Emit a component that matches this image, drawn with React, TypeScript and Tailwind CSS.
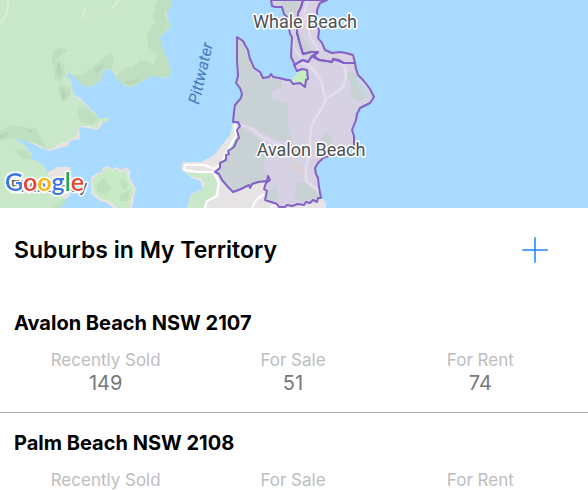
import { Plus } from 'lucide-react'

interface Stat {
  label: string
  value?: number
}

interface Suburb {
  name: string
  stats: Stat[]
}

const suburbs: Suburb[] = [
  {
    name: 'Avalon Beach NSW 2107',
    stats: [
      { label: 'Recently Sold', value: 149 },
      { label: 'For Sale', value: 51 },
      { label: 'For Rent', value: 74 },
    ],
  },
  {
    name: 'Palm Beach NSW 2108',
    stats: [{ label: 'Recently Sold' }, { label: 'For Sale' }, { label: 'For Rent' }],
  },
]

const AVALON =
  'M237 37 L243 41 L245 45 L248 50 L249 55 L250 59 L252 63 L254 68 L260 72 L263 78 L269 77 L271 74 L273 77 L279 78 L287 80 L290 80 L293 84 L300 83 L305 87 L306 80 L308 79 L307 70 L302 69 L297 71 L294 65 L299 62 L303 60 L308 62 L312 56 L315 56 L318 60 L327 61 L332 62 L333 59 L339 60 L344 63 L355 63 L356 69 L358 75 L363 80 L367 85 L370 89 L374 97 L370 103 L360 108 L357 114 L356 120 L352 130 L354 136 L354 147 L323 158 L318 163 L315 168 L316 174 L318 178 L319 187 L321 198 L318 198 L317 202 L313 200 L310 203 L306 202 L304 205 L298 204 L292 206 L287 205 L285 207 L279 207 L277 204 L265 200 L267 191 L264 189 L266 183 L270 180 L268 176 L267 181 L258 182 L252 184 L250 188 L249 185 L241 189 L233 192 L228 187 L222 180 L219 174 L215 172 L220 168 L220 163 L226 160 L226 155 L229 154 L228 151 L234 147 L237 140 L239 138 L237 130 L240 126 L238 122 L233 122 L234 112 L235 105 L241 98 L242 94 L240 88 L236 83 L238 76 L237 60 Z'

const WHALE_WEST =
  'M271 0 L272 6 L275 7 L282 7 L284 14 L287 17 L286 22 L289 27 L290 34 L292 37 L291 57 L295 65 L299 62 L303 60 L308 62 L312 56 L318 52 L311 52 L303 54 L300 44 L297 33 L298 13 L301 7 L303 0 Z'

const WHALE_EAST =
  'M303 0 L301 7 L298 13 L297 33 L300 44 L303 54 L311 52 L318 52 L313 57 L320 60 L332 62 L333 59 L344 63 L355 63 L353 55 L346 53 L340 52 L332 53 L325 50 L322 43 L318 38 L319 31 L317 23 L317 10 L320 3 L327 0 Z'

function TerritoryMap() {
  return (
    <svg
      viewBox="0 0 588 208"
      preserveAspectRatio="xMidYMid slice"
      className="block h-52 w-full bg-[#a9daff]"
      role="img"
      aria-label="Map"
    >
      {/* western shore */}
      <path
        fill="#e6e3e1"
        d="M96 114 L99 119 L104 121 L98 130 L88 128 L79 127 L80 139 L70 141 L68 146 L60 148 L50 151 L41 148 L28 142 L30 140 L78 110 L73 94 L80 98 Z M46 173 L58 167 L70 167 L72 178 L70 196 L60 203 L52 208 L30 208 Z"
      />
      <path
        fill="#c8e8c9"
        d="M0 0 H172 L171 6 L166 13 L167 19 L172 24 L168 30 L160 37 L160 43 L164 53 L168 61 L171 72 L167 79 L160 77 L152 74 L142 82 L135 86 L128 87 L120 83 L115 76 L112 70 L105 69 L101 79 L95 85 L87 87 L80 83 L72 75 L69 72 L66 77 L71 79 L73 92 L76 97 L86 105 L94 113 L98 118 L110 118 L108 122 L99 122 L97 128 L88 126 L78 126 L77 135 L68 141 L60 143 L53 148 L47 150 L41 146 L34 143 L28 142 L20 139 L12 138 L24 144 L32 154 L30 159 L38 161 L44 166 L48 175 L56 181 L64 200 L52 208 H0 Z"
      />
      <g fill="#bfdfc1">
        <path d="M158 0 H172 L170 7 L165 14 L167 21 L172 24 L160 36 L161 45 L168 61 L171 72 L166 78 L149 75 L157 55 L148 47 L147 34 L152 26 L156 22 L152 16 Z" />
        <path d="M110 53 L114 58 L112 69 L105 69 L101 79 L94 85 L87 87 L79 82 L73 75 L84 74 Z" />
        <path d="M140 60 L149 62 L157 71 L151 76 L140 83 L130 87 L120 83 L116 76 L126 67 L132 68 Z" />
        <path d="M54 61 L64 64 L65 76 L60 81 L54 78 L55 68 L52 63 L53 50 L60 48 L68 50 Z" />
        <path d="M60 84 L70 88 L70 97 L63 102 L58 91 Z" />
        <path d="M0 131 L12 125 L36 129 L41 138 L47 149 L34 143 L12 138 L0 141 Z" />
        <path d="M14 149 L29 151 L31 159 L22 159 Z" />
        <path d="M77 110 L86 106 L98 118 L93 125 L80 122 Z" />
        <path d="M52 208 L64 198 L66 202 L60 208 Z" />
      </g>
      <g fill="#b7d5b9">
        <path d="M58 58 L62 71 L60 78 L56 73 Z" />
        <path d="M62 88 L67 95 L64 101 L61 97 Z" />
        <path d="M94 70 L105 62 L101 70 L96 74 Z" />
        <path d="M125 82 L140 78 L137 82 L128 85 Z" />
        <path d="M0 135 L10 131 L7 136 L0 139 Z" />
        <path d="M27 130 L33 129 L31 133 Z" />
      </g>
      <path d="M8 0 C8 8 7 14 5 18 L0 23 M85 9 L82 18 M119 0 L111 9" fill="none" stroke="#d8eed9" strokeWidth="2" />
      <path d="M166 12 L167 18 M111 69 L115 74" stroke="#eee2c9" strokeWidth="1" />

      {/* island */}
      <path
        fill="#e6e3e1"
        d="M102 168 L107 166 L112 169 L117 167 L121 170 L127 167 L130 171 L130 178 L133 183 L136 189 L134 197 L132 208 H113 L107 203 L100 201 L91 194 L91 177 L97 173 L102 172 Z"
      />
      <path
        fill="#c8ebc5"
        d="M103 170 L108 168 L113 171 L117 169 L121 173 L126 170 L128 178 L131 185 L134 190 L131 199 L130 208 H119 L110 201 L101 199 L93 192 L93 179 L98 174 L103 174 Z"
      />
      <path fill="#c0dfbf" d="M97 184 L104 178 L112 188 L105 195 L97 192 Z M121 178 L128 183 L126 190 L120 185 Z M121 194 L130 190 L128 201 L119 201 Z" />

      {/* land south of the headland */}
      <path
        fill="#e6e4e4"
        d="M233 123 L240 125 L275 150 L300 175 L321 198 L326 202 L326 208 H187 L191 194 L203 189 L200 181 L192 178 L181 169 L182 162 L201 162 L214 155 L222 145 L230 135 Z"
      />
      <path fill="#c9e8ca" d="M185 173 L196 173 L212 174 L217 182 L215 195 L206 201 L203 208 H187 L192 194 L202 190 L206 184 L201 178 L192 177 Z M226 150 L234 137 L237 130 L235 143 L229 153 Z" />
      <path
        fill="none"
        stroke="#ffffff"
        strokeWidth="2"
        strokeLinejoin="round"
        d="M235 124 L236 135 L228 150 L221 164 L214 169 L205 165 L185 165 L184 170 L198 172 L214 172 L219 183 L217 196 L207 201 L205 208 M252 208 L256 200 L264 194 M270 207 L277 204"
      />

      {/* territory boundaries */}
      <path d={AVALON} fill="#d6d1e3" />
      <path d={WHALE_WEST} fill="#d1d2de" />
      <path d={WHALE_EAST} fill="#d8d1e2" />
      <g fill="#c8d2d5">
        <path d="M238 38 L243 43 L249 60 L253 70 L262 78 L281 80 L282 87 L271 92 L272 99 L288 104 L288 125 L292 140 L278 141 L262 132 L247 125 L238 122 L234 121 L236 104 L242 95 L237 83 Z" />
        <path d="M240 126 L256 136 L268 148 L263 166 L268 176 L267 181 L250 186 L233 192 L220 177 L215 172 L227 155 L238 141 Z" />
        <path d="M298 181 L309 182 L315 190 L319 197 L308 202 L294 199 Z M268 190 L276 187 L279 195 L275 202 L266 199 Z" />
        <path d="M347 74 L356 72 L360 88 L368 97 L359 102 L349 96 L352 90 Z M321 139 L327 132 L333 139 L331 146 L319 146 Z" />
        <path d="M298 32 L304 39 L313 51 L303 53 Z M284 0 H299 L297 12 L288 18 L282 6 Z" />
      </g>
      <path fill="#c2d9e5" d="M354 74 L359 81 L370 94 L367 97 L359 87 Z" />
      <path fill="#dccfd3" d="M292 162 L304 166 L302 175 L292 169 Z M315 158 L323 156 L316 166 Z M312 8 L318 4 L315 17 Z" />
      <path
        fill="none"
        stroke="#e2ddec"
        strokeWidth="3"
        strokeLinejoin="round"
        d="M300 62 C309 64 319 72 323 88 L325 100 C324 110 312 119 311 129 L309 152 L306 169 L306 181 L319 191 M325 100 L341 89 Q348 80 345 67 L338 61"
      />
      <path
        fill="none"
        stroke="#e2ddec"
        strokeWidth="2"
        d="M240 125 L251 128 L263 138 L275 143 L287 147 L293 158 M308 0 L304 13 L307 27 L311 38 L318 50 M291 35 L294 48 L303 60"
      />
      <path fill="#c5edbd" d="M291 81 L297 73 L302 70 L306 71 L307 79 L304 85 L297 83 Z" />
      <g fill="none" stroke="#8460c8" strokeWidth="2" strokeLinejoin="round" strokeLinecap="round">
        <path d={AVALON} />
        <path d={WHALE_WEST} />
        <path d={WHALE_EAST} />
      </g>

      {/* place labels */}
      <g
        className="font-[Roboto,sans-serif]"
        fontSize="18"
        fill="#4a4f55"
        stroke="#ffffff"
        strokeWidth="3"
        strokeLinejoin="round"
        paintOrder="stroke"
        textAnchor="middle"
      >
        <text x="305" y="28">Whale Beach</text>
        <text x="311" y="156">Avalon Beach</text>
        <text x="49" y="192" fontSize="17">Elvina Bay</text>
      </g>
      <text
        className="font-[Roboto,sans-serif]"
        transform="translate(199 105) rotate(-77)"
        fontSize="16"
        fontStyle="italic"
        fill="#4878bd"
      >
        Pittwater
      </text>

      <text
        x="5"
        y="191"
        className="font-[Lato,sans-serif] font-semibold [filter:drop-shadow(1px_0_0_white)_drop-shadow(-1px_0_0_white)_drop-shadow(0_1px_0_white)_drop-shadow(0_-1px_0_white)_drop-shadow(0_0_1px_white)]"
        fontSize="25"
      >
        <tspan fill="#3b78e7">G</tspan>
        <tspan fill="#ea4335">o</tspan>
        <tspan fill="#fbb40a">o</tspan>
        <tspan fill="#3b78e7">g</tspan>
        <tspan fill="#2ba24c">l</tspan>
        <tspan fill="#ea4335">e</tspan>
      </text>
    </svg>
  )
}

function SuburbRow({ suburb }: { suburb: Suburb }) {
  return (
    <li className="border-b border-[#a8a8a8] pt-4 pb-[18px] last:border-b-0 last:pb-0">
      <h2 className="px-3.5 text-xl leading-7 font-bold">{suburb.name}</h2>
      <dl className="mt-[11px] grid grid-cols-3 pr-3.5 pl-3 text-center">
        {suburb.stats.map(({ label, value }) => (
          <div key={label}>
            <dt className="text-[17px] leading-6 text-[#bdbdbd]">{label}</dt>
            {value !== undefined && <dd className="text-xl leading-[22px] text-[#777777]">{value}</dd>}
          </div>
        ))}
      </dl>
    </li>
  )
}

export default function App() {
  return (
    <main className="bg-white font-[Inter,sans-serif] text-black">
      <TerritoryMap />
      <header className="flex items-center justify-between pt-5 pr-8 pb-[21px] pl-3.5">
        <h1 className="text-[23px] leading-11 font-semibold">Suburbs in My Territory</h1>
        <button type="button" aria-label="Add suburb" className="text-[#1f8bf8]">
          <Plus size={42} strokeWidth={0.9} />
        </button>
      </header>
      <ul>
        {suburbs.map((suburb) => (
          <SuburbRow key={suburb.name} suburb={suburb} />
        ))}
      </ul>
    </main>
  )
}
